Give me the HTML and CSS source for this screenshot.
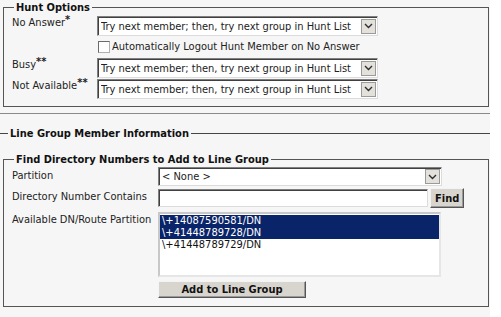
FILE: index.html
```html
<!DOCTYPE html>
<html lang="en">
  <head>
    <meta charset="UTF-8" />
    <meta name="viewport" content="width=device-width, initial-scale=1.0" />
    <title>Line Group Configuration</title>
    <link rel="stylesheet" href="styles.css">
  </head>
  <body>
    <div class="page">
      <fieldset class="box">
        <legend>Hunt Options</legend>
        <div class="hunt-grid">
          <label>No Answer<sup>*</sup></label>
          <div class="select hunt">
            <span class="value">Try next member; then, try next group in Hunt List</span>
            <span class="arrow"><svg width="9" height="6" viewBox="0 0 9 6"><path d="M1 1l3.5 3.5L8 1" fill="none" stroke="#2b2f3a" stroke-width="1.4"/></svg></span>
          </div>

          <span></span>
          <label class="check"><input type="checkbox" /> Automatically Logout Hunt Member on No Answer</label>

          <label>Busy<sup>**</sup></label>
          <div class="select hunt">
            <span class="value">Try next member; then, try next group in Hunt List</span>
            <span class="arrow"><svg width="9" height="6" viewBox="0 0 9 6"><path d="M1 1l3.5 3.5L8 1" fill="none" stroke="#2b2f3a" stroke-width="1.4"/></svg></span>
          </div>

          <label>Not Available<sup>**</sup></label>
          <div class="select hunt">
            <span class="value">Try next member; then, try next group in Hunt List</span>
            <span class="arrow"><svg width="9" height="6" viewBox="0 0 9 6"><path d="M1 1l3.5 3.5L8 1" fill="none" stroke="#2b2f3a" stroke-width="1.4"/></svg></span>
          </div>
        </div>
      </fieldset>

      <hr class="divider" />

      <fieldset class="section">
        <legend>Line Group Member Information</legend>
      </fieldset>

      <fieldset class="box find">
        <legend>Find Directory Numbers to Add to Line Group</legend>
        <div class="find-grid">
          <label>Partition</label>
          <div class="select partition">
            <span class="value">&lt; None &gt;</span>
            <span class="arrow"><svg width="9" height="6" viewBox="0 0 9 6"><path d="M1 1l3.5 3.5L8 1" fill="none" stroke="#2b2f3a" stroke-width="1.4"/></svg></span>
          </div>

          <label for="dnContains">Directory Number Contains</label>
          <div class="search">
            <input type="text" id="dnContains" />
            <button type="button" class="btn">Find</button>
          </div>

          <label class="list-label">Available DN/Route Partition</label>
          <div class="listbox">
            <div class="option selected">\+14087590581/DN</div>
            <div class="option selected">\+41448789728/DN</div>
            <div class="option">\+41448789729/DN</div>
          </div>

          <span></span>
          <div><button type="button" class="btn add">Add to Line Group</button></div>
        </div>
      </fieldset>
    </div>
  </body>
</html>
```

FILE: styles.css
```css
body {
  margin: 0;
  background-color: #fff;
  font-family: "DejaVu Sans Condensed", Tahoma, "DejaVu Sans", sans-serif;
  font-size: 11px;
  color: #222;
}
.page {
  width: 490px;
  height: 317px;
  padding-top: 1px;
  box-sizing: border-box;
  background-color: #f6f6f6;
}
fieldset {
  margin: 0;
  min-width: 0;
}
legend {
  font-weight: bold;
  color: #111;
  padding: 0 2px;
  margin-left: 2px;
  line-height: 13px;
}
.box {
  margin-left: 3px;
  width: 486px;
  box-sizing: border-box;
  border: 1px solid #555;
  padding: 2px 8px 7px 8px;
}
.hunt-grid {
  display: grid;
  grid-template-columns: 85px 281px;
  row-gap: 1px;
  align-items: start;
}
label sup {
  font-weight: bold;
  font-size: 11px;
  line-height: 0;
  vertical-align: 3px;
}
.select {
  display: flex;
  align-items: center;
  height: 20px;
  box-sizing: border-box;
  background-color: #fff;
  border: 1px solid;
  border-color: #808080 #dcdcdc #dcdcdc #808080;
  box-shadow: inset 1px 1px 0 #404040;
  padding: 1px 1px 1px 3px;
  white-space: nowrap;
}
.select .value {
  flex: 1;
  overflow: hidden;
}
.arrow {
  width: 15px;
  height: 15px;
  box-sizing: border-box;
  display: flex;
  align-items: center;
  justify-content: center;
  background-color: #e4e1da;
  border: 1px solid #9a9a9a;
}
.check {
  display: flex;
  align-items: center;
  gap: 2px;
  height: 20px;
  margin-left: 1px;
  padding-bottom: 1px;
  box-sizing: border-box;
}
.check input {
  appearance: none;
  margin: 0;
  width: 12px;
  height: 12px;
  background-color: #fff;
  border: 1px solid #7a7a7a;
  border-color: #6a6a6a #b0b0b0 #b0b0b0 #6a6a6a;
}
.divider {
  margin: 6px 0 0 0;
  border: none;
  border-top: 1px solid #8a8a8a;
  width: 490px;
}
.section {
  border: none;
  border-top: 1px solid #444;
  padding: 0 0 0 8px;
  margin-top: 13px;
  height: 12px;
}
.section legend {
  margin-left: 0;
}
.find {
  margin-top: 13px;
  padding: 1px 8px 8px 8px;
}
.find-grid {
  display: grid;
  grid-template-columns: 146px auto;
  row-gap: 2px;
  align-items: start;
}
.find-grid label {
  padding-top: 2px;
}
.find-grid .list-label {
  padding-top: 3px;
}
.partition {
  width: 284px;
  height: 19px;
}
.search {
  display: flex;
  align-items: center;
  gap: 2px;
  height: 20px;
}
.search input {
  width: 270px;
  height: 18px;
  box-sizing: border-box;
  margin: 0;
  border: 1px solid;
  border-color: #808080 #dcdcdc #dcdcdc #808080;
  box-shadow: inset 1px 1px 0 #404040;
  background-color: #fff;
}
.btn {
  font-family: inherit;
  font-size: 11px;
  font-weight: bold;
  color: #111;
  background-color: #d8d5ce;
  border: 1px solid;
  border-color: #f4f4f4 #555 #555 #f4f4f4;
  box-shadow: inset -1px -1px 0 #999;
  padding: 2px 4px;
  height: 20px;
}
.listbox {
  width: 283px;
  height: 65px;
  margin-top: 2px;
  box-sizing: border-box;
  background-color: #fff;
  border: 2px solid;
  border-color: #c8c8c8 #e6e6e6 #e6e6e6 #c8c8c8;
  padding: 1px 0 0 0;
}
.option {
  line-height: 12px;
  padding-left: 2px;
  color: #111;
}
.option.selected {
  background-color: #0a246a;
  color: #fff;
}
.add {
  width: 148px;
  height: 17px;
  padding: 0;
  margin-top: 2px;
}
```
